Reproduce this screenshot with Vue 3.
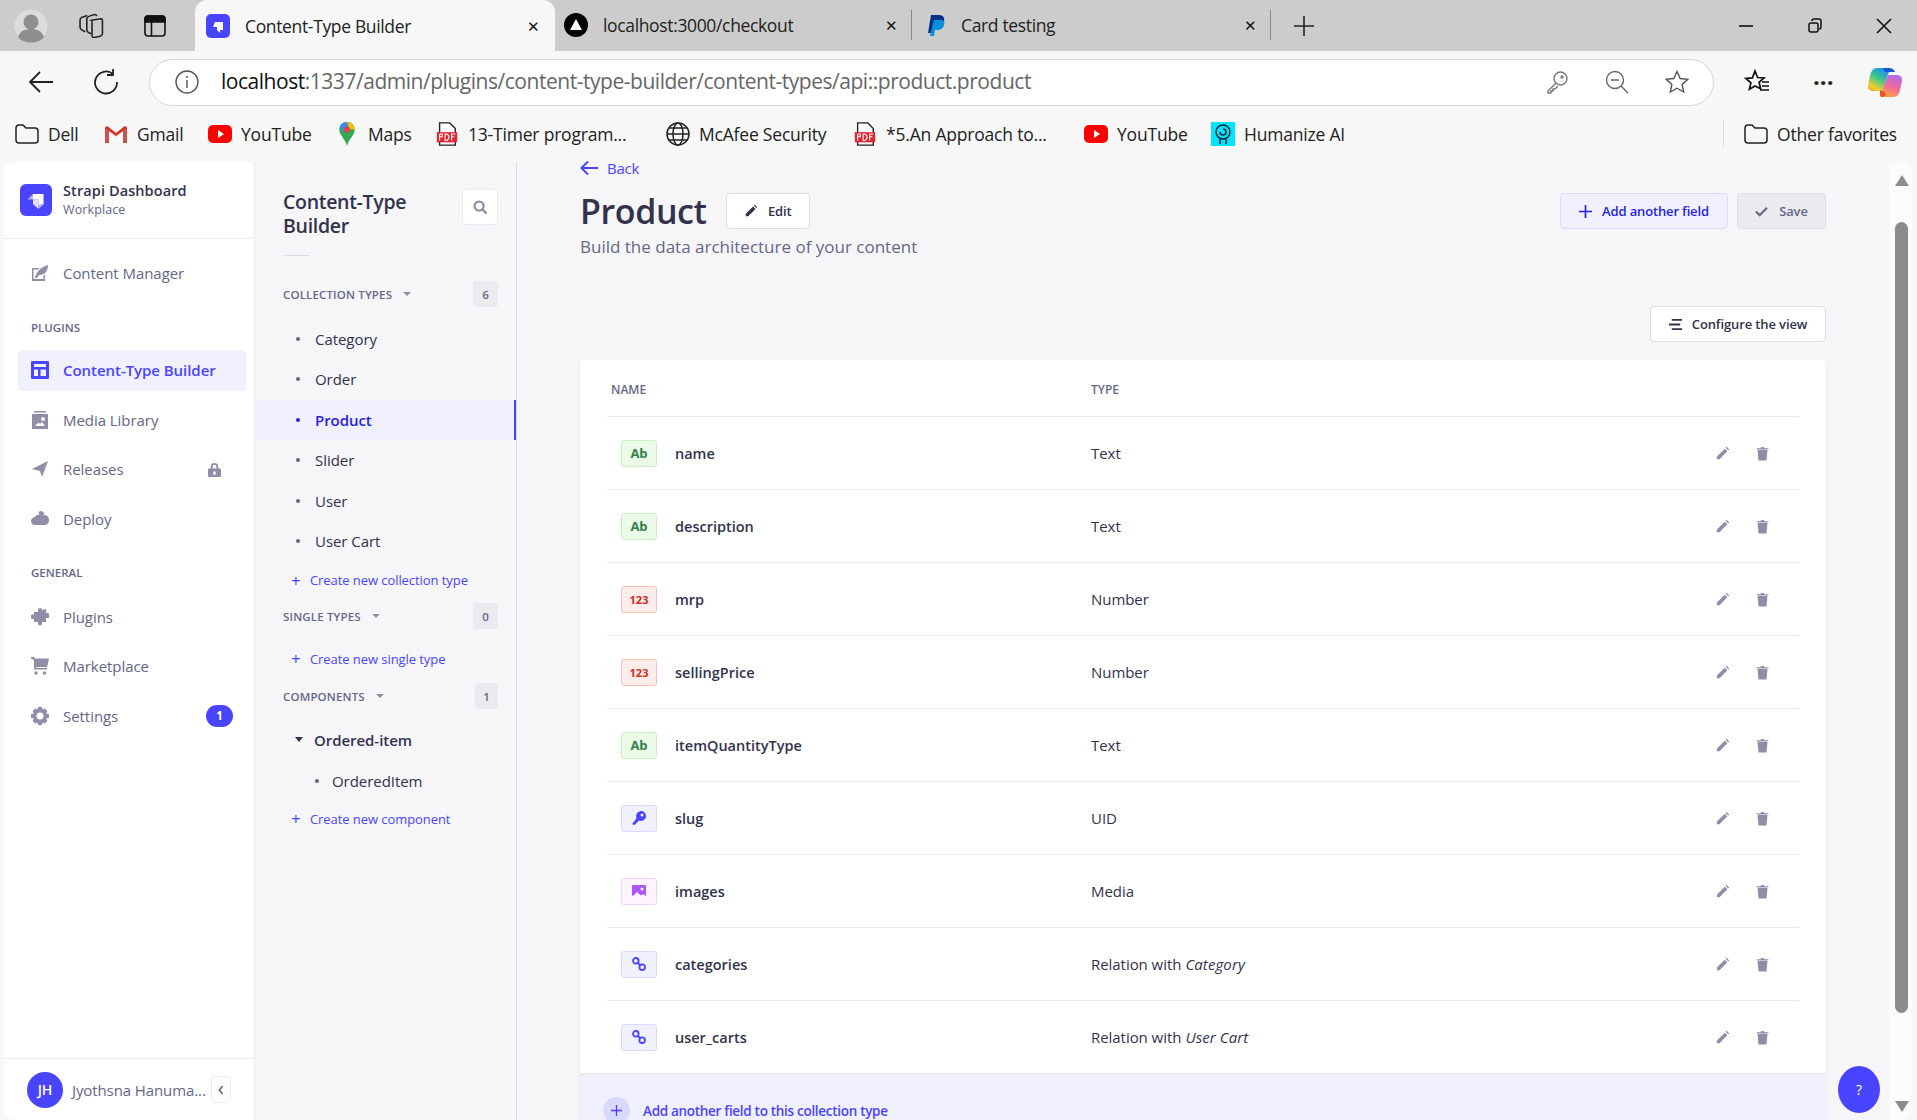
<script setup>
const bookmarks = [
  { label: 'Dell', icon: 'folder', width: 89 },
  { label: 'Gmail', icon: 'gmail', width: 104 },
  { label: 'YouTube', icon: 'yt', width: 127 },
  { label: 'Maps', icon: 'maps', width: 100 },
  { label: '13-Timer program...', icon: 'pdf', width: 231 },
  { label: 'McAfee Security', icon: 'globe', width: 187 },
  { label: '*5.An Approach to...', icon: 'pdf', width: 231 },
  { label: 'YouTube', icon: 'yt', width: 127 },
  { label: 'Humanize AI', icon: 'human', width: 150 }
]

const pencil = 'M3 21v-4.2L15.6 4.2l4.2 4.2L7.2 21H3zM17 2.8l1.5-1.5 4.2 4.2-1.5 1.5L17 2.8z'
const trash = 'M4 6h16l-1.6 17H5.6L4 6zM2.5 3.5h6L10 1.5h4l1.5 2h6V5h-19V3.5z'

const fields = [
  { name: 'name', type: 'Text', kind: 'text' },
  { name: 'description', type: 'Text', kind: 'text' },
  { name: 'mrp', type: 'Number', kind: 'num' },
  { name: 'sellingPrice', type: 'Number', kind: 'num' },
  { name: 'itemQuantityType', type: 'Text', kind: 'text' },
  { name: 'slug', type: 'UID', kind: 'uid' },
  { name: 'images', type: 'Media', kind: 'media' },
  { name: 'categories', type: 'Relation with', target: 'Category', kind: 'rel' },
  { name: 'user_carts', type: 'Relation with', target: 'User Cart', kind: 'rel' }
]

const collections = ['Category', 'Order', 'Product', 'Slider', 'User', 'User Cart']
</script>

<template>
  <div class="screen">
    <div class="tabbar">
      <div class="tab-tools">
        <svg class="avatar-ph" viewBox="0 0 34 34">
          <circle cx="17" cy="17" r="16.500" fill="#dcdcdc" />
          <circle cx="17" cy="13" r="7.500" fill="#8f8f8f" />
          <path d="M4 28c2-6 7-8 13-8s11 2 13 8c-3 4-8 5.500-13 5.500S7 32 4 28z" fill="#8f8f8f" />
        </svg>
        <svg class="tool" viewBox="0 0 24 24" fill="none" stroke="#222" stroke-width="1.500">
          <path d="M12 7l9-1.500c1 0 1.500.5 1.500 1.500v13c0 1-.5 1.500-1.500 2l-6 1.500c-1.500.3-2.500-.5-2.500-2V9c0-1 .2-1.700-.5-2z" />
          <path d="M12 20c-3-1-4.500-2-4.500-4V6c0-2 1-2.500 2.500-3l5-1.500c1-.3 1.500 0 2 1.500" />
          <path d="M6 18c-3-1-5-2.500-5-4.500V7c0-1.500 1-2.500 2-3l5-1.500" />
        </svg>
        <svg class="tool tool-side" viewBox="0 0 22 22" fill="none" stroke="#111" stroke-width="1.600">
          <rect x="1" y="1" width="20" height="20" rx="3" />
          <path d="M1 4c0-2 1-3 3-3h14c2 0 3 1 3 3v3H1z" fill="#111" />
          <path d="M7.500 7v14" />
        </svg>
      </div>
      <div class="tab tab-active">
        <svg class="fav" viewBox="0 0 24 24">
          <rect width="24" height="24" rx="5" fill="#4945ff" />
          <path d="M9 8h8v8h-3v3l-3-3v-3H7z" fill="#fff" />
        </svg>
        <span class="tab-label">Content-Type Builder</span>
        <span class="tab-x">✕</span>
      </div>
      <div class="tab tab-two">
        <svg class="fav" viewBox="0 0 24 24">
          <circle cx="12" cy="12" r="12" fill="#000" />
          <path d="M12 6l6 11H6z" fill="#fff" />
        </svg>
        <span class="tab-label">localhost:3000/checkout</span>
        <span class="tab-x">✕</span>
      </div>
      <div class="tab tab-three">
        <svg class="fav" viewBox="0 0 24 24">
          <path d="M7 2h8c4 0 6 3 5 6-1 4-4 5-8 5H9l-1 7H4z" fill="#003087" />
          <path d="M10 7h7c3 0 4 2 3 5-1 4-4 5-7 5h-2l-1 6H6z" fill="#0a8fdc" />
        </svg>
        <span class="tab-label">Card testing</span>
        <span class="tab-x">✕</span>
      </div>
      <svg class="new-tab" viewBox="0 0 22 22" stroke="#222" stroke-width="1.6"><path d="M11 1v20M1 11h20" /></svg>
      <div class="win-controls">
        <svg viewBox="0 0 16 16" stroke="#111" stroke-width="1.6"><path d="M1 8h14" /></svg>
        <svg viewBox="0 0 16 16" fill="none" stroke="#111" stroke-width="1.5">
          <rect x="2" y="5" width="9" height="9" rx="2" />
          <path d="M5 3c0-1 1-2 2-2h5c1 0 2 1 2 2v6c0 1-1 2-2 2" />
        </svg>
        <svg viewBox="0 0 16 16" stroke="#111" stroke-width="1.6"><path d="M1 1l14 14M15 1 1 15" /></svg>
      </div>
    </div>

    <div class="toolbar">
      <svg class="nav-btn" viewBox="0 0 26 26" fill="none" stroke="#222" stroke-width="1.8">
        <path d="M25 13H2M12 3 2 13l10 10" />
      </svg>
      <svg class="nav-btn reload" viewBox="0 0 26 26" fill="none" stroke="#222" stroke-width="1.8">
        <path d="M20 5a11 11 0 1 0 4 8M20 0v6h-6" />
      </svg>
      <div class="omnibox">
        <svg class="info" viewBox="0 0 24 24" fill="none" stroke="#555" stroke-width="1.4">
          <circle cx="12" cy="12" r="11" />
          <path d="M12 10v8M12 6v2" />
        </svg>
        <span class="url"><b>localhost</b>:1337/admin/plugins/content-type-builder/content-types/api::product.product</span>
        <div class="omni-icons">
          <svg viewBox="0 0 24 24" fill="none" stroke="#777" stroke-width="1.4">
            <circle cx="15.5" cy="8.5" r="6.5" />
            <path d="M11 13 3 21v2h3v-2h2v-2h2l3-3" />
            <circle cx="17" cy="7" r="1" />
          </svg>
          <svg viewBox="0 0 24 24" fill="none" stroke="#666" stroke-width="1.4">
            <circle cx="10" cy="10" r="8.5" />
            <path d="M16 16l7 7M6 10h8" />
          </svg>
          <svg viewBox="0 0 24 24" fill="none" stroke="#555" stroke-width="1.4">
            <path d="M12 1.5l3.2 7 7.6.8-5.7 5.1 1.6 7.6L12 18.2 5.300 22l1.600-7.600L1.200 9.300l7.600-.8z" />
          </svg>
        </div>
      </div>
      <svg class="fav-list" viewBox="0 0 26 26" fill="none" stroke="#111" stroke-width="1.7">
        <path d="M11 2l2.600 6.500 6.400.5-4.900 4.300 1.500 6.500L11 17l-5.600 3.300 1.500-6.500L2 9.500l6.400-.6zM18 13h7M18 17h7M16 21h9" />
      </svg>
      <span class="dots">···</span>
      <svg class="copilot" viewBox="0 0 34 31">
        <defs>
          <linearGradient id="cpa" x1="0.7" y1="0" x2="0.2" y2="1">
            <stop offset="0" stop-color="#1a8ff0" />
            <stop offset="0.45" stop-color="#3cc98a" />
            <stop offset="0.85" stop-color="#f6d02b" />
            <stop offset="1" stop-color="#f4a62b" />
          </linearGradient>
          <linearGradient id="cpb" x1="0.7" y1="0" x2="0.3" y2="1">
            <stop offset="0" stop-color="#b06bf0" />
            <stop offset="0.5" stop-color="#f06aa0" />
            <stop offset="1" stop-color="#fba23c" />
          </linearGradient>
        </defs>
        <path d="M9 1h11c1.500 0 2 1 1.500 2.500L14 24H5c-3.500 0-5.500-2.500-5-6l2-9c1-5 3.500-8 7-8z" fill="url(#cpa)" />
        <path d="M15 1h6c3 0 5 1.500 6 4H17z" fill="#1454d8" />
        <path d="M20 8h9c3.500 0 5.500 2.500 5 6l-2 9c-1 5-3.500 7-7 7H14c-1.500 0-2-1-1.500-2.500z" fill="url(#cpb)" />
        <path d="M12 23l2 1c2 0 3 1 4 4l-3 2h-1c-2 0-2-2-2-4z" fill="#e8502c" />
      </svg>
    </div>

    <div class="bookmarks">
      <div v-for="(b, i) in bookmarks" :key="i" class="bm" :style="{ width: b.width + 'px' }">
        <svg v-if="b.icon === 'folder'" class="bm-ic" viewBox="0 0 24 24" fill="none" stroke="#222" stroke-width="1.500">
          <path d="M1 6c0-2 1-3 3-3h4l3 3h9c2 0 3 1 3 3v9c0 2-1 3-3 3H4c-2 0-3-1-3-3z" />
        </svg>
        <svg v-else-if="b.icon === 'gmail'" class="bm-ic" viewBox="0 0 24 24">
          <path d="M1 5v16h4V10l7 5 7-5v11h4V5l-3-1-8 6-8-6z" fill="#d9d9d9" />
          <path d="M1 5l4 2v14H1zM19 7l4-2v16h-4z" fill="#cf5048" />
          <path d="M3 4l9 7 9-7 2 2-11 8L1 6z" fill="#d93025" />
        </svg>
        <svg v-else-if="b.icon === 'yt'" class="bm-ic" viewBox="0 0 24 24">
          <rect y="3" width="24" height="18" rx="5" fill="#f00" />
          <path d="M10 8l6 4-6 4z" fill="#fff" />
        </svg>
        <svg v-else-if="b.icon === 'maps'" class="bm-ic" viewBox="0 0 20 28">
          <path d="M10 0c6 0 9 4 9 9 0 6-7 11-9 19C8 20 1 15 1 9c0-5 3-9 9-9z" fill="#34a853" />
          <path d="M2 5C3 2 6 0 10 0l3 5-7 8z" fill="#4285f4" />
          <path d="M10 0c5 0 9 4 9 9l-6-1-2-5z" fill="#fbbc04" />
          <circle cx="10" cy="9" r="3.500" fill="#ea4335" />
        </svg>
        <svg v-else-if="b.icon === 'pdf'" class="bm-ic" viewBox="0 0 24 26">
          <path d="M4 1h11l6 6v18H4z" fill="#fff" stroke="#222" stroke-width="1.500" />
          <rect x="1" y="11" width="22" height="11" fill="#e0252f" />
          <path d="M4 13v7M4 13h3v3H4M10 13v7h2l2-2v-3l-2-2zM17 20v-7h4M17 16h3" fill="none" stroke="#fff" stroke-width="1.200" />
        </svg>
        <svg v-else-if="b.icon === 'globe'" class="bm-ic" viewBox="0 0 24 24" fill="none" stroke="#222" stroke-width="1.500">
          <circle cx="12" cy="12" r="11" />
          <ellipse cx="12" cy="12" rx="5" ry="11" />
          <path d="M1 12h22M3 6h18M3 18h18" />
        </svg>
        <svg v-else class="bm-ic" viewBox="0 0 24 24">
          <rect width="24" height="24" fill="#00e5ff" />
          <circle cx="12" cy="10" r="7" fill="none" stroke="#123" stroke-width="1.500" />
          <path d="M9 16v6M15 16v6M12 7a3 3 0 1 1-3 3" fill="none" stroke="#123" stroke-width="1.500" />
        </svg>
        <span class="bm-label">{{ b.label }}</span>
      </div>
      <div class="bm-other">
        <svg class="bm-ic" viewBox="0 0 24 24" fill="none" stroke="#222" stroke-width="1.500">
          <path d="M1 6c0-2 1-3 3-3h4l3 3h9c2 0 3 1 3 3v9c0 2-1 3-3 3H4c-2 0-3-1-3-3z" />
        </svg>
        <span class="bm-label">Other favorites</span>
      </div>
    </div>

    <div class="page">
      <aside class="sidebar">
        <div class="brand">
          <svg class="brand-logo" viewBox="0 0 32 32">
            <rect width="32" height="32" rx="6" fill="#4945ff" />
            <path d="M13 10h10.500v10.500H18.500v-5H13z" fill="#fff" />
            <path d="M13 10v5.500H7.500zM18.500 20.500V25l5-4.500z" fill="#fff" opacity=".6" />
            <path d="M13 15.500h5.500V25L13 20z" fill="#fff" opacity=".85" />
          </svg>
          <div>
            <div class="brand-name">Strapi Dashboard</div>
            <div class="brand-sub">Workplace</div>
          </div>
        </div>
        <nav class="nav">
          <div class="group">
            <div class="nav-item">
              <svg class="nav-ic" viewBox="0 0 18 18" fill="#8e8ea9">
                <path d="M1 4h7v1.500H2.500v9.500h10v-4H14V17H1zM17 1c0 6-3 10-9 10l-2 3H4c1-5 5-11 13-13z" />
              </svg>
              Content Manager
            </div>
          </div>
          <div class="nav-label">PLUGINS</div>
          <div class="group">
            <div class="nav-item active">
              <svg class="nav-ic" viewBox="0 0 18 18" fill="#4945ff">
                <path fill-rule="evenodd" d="M1 0h16a1 1 0 0 1 1 1v16a1 1 0 0 1-1 1H1a1 1 0 0 1-1-1V1a1 1 0 0 1 1-1zm2 3v3h12V3zm0 5.500V15h4V8.500zm6.500 0V15H15V8.500z" />
              </svg>
              Content-Type Builder
            </div>
            <div class="nav-item">
              <svg class="nav-ic" viewBox="0 0 18 18" fill="#8e8ea9">
                <path fill-rule="evenodd" d="M3 0h12v1.500H3zM1 3h16v15H1zm3 12h10l-3-4-2 2-1.500-1.500zm8-9a2 2 0 1 0 0 4 2 2 0 0 0 0-4z" />
              </svg>
              Media Library
            </div>
            <div class="nav-item">
              <svg class="nav-ic" viewBox="0 0 18 18" fill="#8e8ea9"><path d="M17 1 11 17l-2-6-8-2zM15 3 9 9" /></svg>
              Releases
              <svg class="lock" viewBox="0 0 14 16" fill="#8e8ea9">
                <path fill-rule="evenodd" d="M3 7V5a4 4 0 0 1 8 0v2h2a1 1 0 0 1 1 1v7a1 1 0 0 1-1 1H1a1 1 0 0 1-1-1V8a1 1 0 0 1 1-1zm2 0h4V5a2 2 0 0 0-4 0zm2 3a1.500 1.500 0 0 0-1 2.500V14h2v-1.500A1.500 1.500 0 0 0 7 10z" />
              </svg>
            </div>
            <div class="nav-item">
              <svg class="nav-ic" viewBox="0 0 18 18" fill="#8e8ea9">
                <path d="M9 1c2 0 4 1 4.500 3L8 7.500c1-2 .5-3-.5-4C8 2 8.500 1 9 1zM4 7c1-2 3-2.500 5-1.500L14 5c3 .5 4 3 4 5 0 3-2 5-5 5H4c-3 0-4-2-4-4 0-2 2-4 4-4z" />
              </svg>
              Deploy
            </div>
          </div>
          <div class="nav-label general">GENERAL</div>
          <div class="group">
            <div class="nav-item">
              <svg class="nav-ic" viewBox="0 0 18 18" fill="#8e8ea9">
                <path d="M7 4V2a2 2 0 0 1 4 0l4-1v4h1.500a2 2 0 0 1 0 5H15v4h-4v1.500a2 2 0 0 1-4 0V14H3v-3H1.500a2 2 0 0 1 0-4.500H3V4z" />
              </svg>
              Plugins
            </div>
            <div class="nav-item">
              <svg class="nav-ic" viewBox="0 0 18 18" fill="#8e8ea9">
                <path d="M0 0h3l1 1.500h14L16 10H5v1h11v1.500H3V3L0 1.500z" />
                <circle cx="5" cy="16" r="1.700" />
                <circle cx="13.500" cy="16" r="1.700" />
              </svg>
              Marketplace
            </div>
            <div class="nav-item">
              <svg class="nav-ic" viewBox="0 0 18 18" fill="#8e8ea9">
                <path fill-rule="evenodd" d="M7 0h4l.5 2.500 2.300-1 2.600 2.700-1.200 2.300L18 7v4l-2.800.5 1.200 2.300-2.600 2.700-2.300-1L11 18H7l-.5-2.500-2.300 1-2.600-2.700 1.200-2.300L0 11V7l2.800-.5-1.200-2.300 2.600-2.700 2.300 1zm2 5.500a3.500 3.500 0 1 0 0 7 3.500 3.500 0 0 0 0-7z" />
              </svg>
              Settings
              <span class="badge">1</span>
            </div>
          </div>
        </nav>
        <div class="user">
          <span class="avatar">JH</span>
          <span class="user-name">Jyothsna Hanuma...</span>
          <span class="collapse">
            <svg viewBox="0 0 10 14" fill="none" stroke="#666687" stroke-width="2"><path d="M7 2 3 7l4 5" /></svg>
          </span>
        </div>
      </aside>

      <section class="subnav">
        <div class="sub-head">
          <h2>Content-Type Builder</h2>
          <span class="search-btn">
            <svg viewBox="0 0 16 16" fill="none" stroke="#8e8ea9" stroke-width="2.400">
              <circle cx="6.500" cy="6.500" r="4.800" />
              <path d="M10 10l4.500 4.500" />
            </svg>
          </span>
        </div>
        <div class="sub-rule"></div>

        <div class="sec-head">
          <span>COLLECTION TYPES</span><i class="caret"></i>
          <span class="count">6</span>
        </div>
        <ul class="sub-list">
          <li v-for="c in collections" :key="c" :class="{ on: c === 'Product' }"><i class="dot"></i>{{ c }}</li>
        </ul>
        <div class="create create-first"><span class="plus">+</span>Create new collection type</div>

        <div class="sec-head sec-single">
          <span>SINGLE TYPES</span><i class="caret"></i>
          <span class="count">0</span>
        </div>
        <div class="create create-single"><span class="plus">+</span>Create new single type</div>

        <div class="sec-head sec-comp">
          <span>COMPONENTS</span><i class="caret"></i>
          <span class="count small">1</span>
        </div>
        <div class="comp-group"><i class="caret dark"></i>Ordered-item</div>
        <div class="comp-item"><i class="dot"></i>OrderedItem</div>
        <div class="create create-comp"><span class="plus">+</span>Create new component</div>
      </section>

      <main class="main">
        <div class="back">
          <svg viewBox="0 0 18 16" fill="none" stroke="#4945ff" stroke-width="2"><path d="M18 8H2M8 1.500 1.500 8 8 14.500" /></svg>
          Back
        </div>
        <div class="title-row">
          <h1>Product</h1>
          <button class="btn edit-btn">
            <svg viewBox="0 0 24 24" fill="#32324d"><path :d="pencil" /></svg>
            Edit
          </button>
          <div class="spacer"></div>
          <button class="btn add-btn">
            <svg viewBox="0 0 14 14" stroke="#271fe0" stroke-width="1.800"><path d="M7 0v14M0 7h14" /></svg>
            Add another field
          </button>
          <button class="btn save-btn">
            <svg viewBox="0 0 14 12" fill="none" stroke="#666687" stroke-width="2.400"><path d="M1 6l4 4 8-8" /></svg>
            Save
          </button>
        </div>
        <p class="subtitle">Build the data architecture of your content</p>
        <div class="config-row">
          <button class="btn config-btn">
            <svg viewBox="0 0 14 14" stroke="#32324d" stroke-width="2"><path d="M3 2h11M0 7h12M3 12h11" /></svg>
            Configure the view
          </button>
        </div>

        <div class="card">
          <div class="thead">
            <span class="col-name">NAME</span>
            <span class="col-type">TYPE</span>
          </div>
          <div v-for="f in fields" :key="f.name" class="row">
            <span class="col-name cell-name">
              <span class="chip" :class="'chip-' + f.kind">
                <template v-if="f.kind === 'text'">Ab</template>
                <template v-else-if="f.kind === 'num'">123</template>
                <svg v-else-if="f.kind === 'uid'" viewBox="0 0 14 14" fill="#4945ff">
                  <path fill-rule="evenodd" d="M9 0a5 5 0 0 1 0 10c-.7 0-1.300-.1-1.900-.4L3 13.500l-1.800.5-1-1L4.600 7A5 5 0 0 1 9 0zm1 2.500a1.500 1.500 0 1 0 0 3 1.500 1.500 0 0 0 0-3z" />
                </svg>
                <svg v-else-if="f.kind === 'media'" viewBox="0 0 14 12" fill="#ac56f5">
                  <path fill-rule="evenodd" d="M1 0h12a1 1 0 0 1 1 1v10l-3-2-2 1.500L5 7 2 10l-2 1V1a1 1 0 0 1 1-1zm9 2.500a1.500 1.500 0 1 0 0 3 1.500 1.500 0 0 0 0-3z" />
                </svg>
                <svg v-else viewBox="0 0 14 14" fill="none" stroke="#4945ff" stroke-width="1.800">
                  <circle cx="3.800" cy="3.800" r="2.800" />
                  <circle cx="10.200" cy="10.200" r="2.800" />
                  <path d="M5.500 5.500l3 3" />
                </svg>
              </span>
              <span class="field-name">{{ f.name }}</span>
            </span>
            <span class="col-type">{{ f.type }}<em v-if="f.target">{{ f.target }}</em></span>
            <span class="actions">
              <svg viewBox="0 0 24 24" fill="#8e8ea9"><path :d="pencil" /></svg>
              <svg viewBox="0 0 24 24" fill="#8e8ea9"><path :d="trash" /></svg>
            </span>
          </div>
          <div class="card-foot">
            <span class="foot-plus">
              <svg viewBox="0 0 12 12" stroke="#4945ff" stroke-width="1.400"><path d="M6 0v12M0 6h12" /></svg>
            </span>
            <span class="foot-text">Add another field to this collection type</span>
          </div>
        </div>
      </main>

      <div class="scrollbar">
        <i class="arrow up"></i>
        <div class="thumb"></div>
        <i class="arrow down"></i>
      </div>

      <button class="help">?</button>
    </div>
  </div>
</template>

<style>
html, body { margin: 0; background: #f7f7f7; overflow: hidden; }
</style>

<style scoped>
* { box-sizing: border-box; }
.screen { width: 1917px; height: 1120px; display: flex; flex-direction: column; overflow: hidden; font-family: "Open Sans", "Noto Sans", sans-serif; color: #32324d; background: #f7f7f7; }

/* browser chrome */
.tabbar { height: 51px; background: #ccc; display: flex; align-items: flex-end; flex: none; }
.tab-tools { width: 195px; height: 51px; display: flex; align-items: center; padding-left: 14px; }
.avatar-ph { width: 34px; height: 34px; }
.tool { width: 25px; height: 25px; margin-left: 31px; }
.tool.tool-side { width: 22px; height: 22px; margin-left: 40px; }
.tab { height: 51px; display: flex; align-items: center; font-size: 17.5px; letter-spacing: -0.35px; color: #222; }
.tab-active { width: 360px; background: #f7f7f7; border-radius: 12px 12px 0 0; padding: 0 15px 0 11px; }
.tab-two { width: 357px; padding: 0 13px 0 9px; border-right: 1px solid #888; height: 30px; margin-bottom: 11px; }
.tab-three { width: 359px; padding: 0 13px 0 12px; border-right: 1px solid #888; height: 30px; margin-bottom: 11px; }
.tab-three .fav { margin-right: 13px; }
.fav { width: 24px; height: 24px; flex: none; margin-right: 15px; }
.tab-label { flex: 1; white-space: nowrap; }
.tab-x { font-size: 15px; color: #111; }
.new-tab { width: 22px; height: 22px; margin: 0 0 14px 22px; }
.win-controls { margin-left: auto; display: flex; gap: 53px; padding-right: 25px; align-self: center; }
.win-controls svg { width: 16px; height: 16px; fill: none; }

.toolbar { height: 60px; display: flex; align-items: center; padding: 2px 0 0 28px; flex: none; }
.nav-btn { width: 26px; height: 26px; }
.reload { margin-left: 39px; }
.omnibox { margin-left: 30px; width: 1565px; height: 47px; background: #fff; border: 1.5px solid #d4d4d4; border-radius: 24px; display: flex; align-items: center; padding-left: 25px; }
.info { width: 24px; height: 24px; flex: none; }
.url { margin-left: 22px; margin-top: -2px; font-size: 21px; letter-spacing: -0.47px; color: #666; white-space: nowrap; }
.url b { font-weight: 400; color: #111; }
.omni-icons { margin-left: auto; display: flex; gap: 36px; padding-right: 24px; }
.omni-icons svg { width: 24px; height: 24px; }
.fav-list { width: 26px; height: 26px; margin-left: 30px; }
.dots { margin-left: 43px; font-size: 24px; font-weight: 700; color: #222; line-height: 1; }
.copilot { width: 34px; height: 31px; margin-left: 34px; }

.bookmarks { height: 49px; display: flex; align-items: center; padding: 0 0 3px 15px; flex: none; }
.bm { display: flex; align-items: center; flex: none; }
.bm-ic { width: 24px; height: 24px; flex: none; margin-right: 9px; }
.bm-label { font-size: 17.5px; letter-spacing: -0.2px; color: #222; white-space: nowrap; }
.bm-other { margin-left: auto; padding: 0 20px 0 20px; height: 28px; display: flex; align-items: center; border-left: 1px solid #ddd; }

/* strapi page */
.page { position: relative; flex: 1; margin: 2px 5px 0 4px; min-height: 0; display: flex; background: #f6f6f9; border-radius: 10px; }
.sidebar { width: 251px; flex: none; background: #fff; border-right: 1px solid #eaeaef; border-radius: 10px 0 0 10px; display: flex; flex-direction: column; }
.brand { height: 77px; flex: none; display: flex; align-items: center; gap: 11px; padding: 0 16px; border-bottom: 1px solid #eaeaef; }
.brand-logo { width: 32px; height: 32px; flex: none; }
.brand-name { font-size: 14.500px; font-weight: 600; line-height: 20px; letter-spacing: 0.1px; }
.brand-sub { font-size: 12.500px; color: #666687; line-height: 18px; letter-spacing: 0.1px; }
.nav { padding: 13.500px 8px 0 14px; flex: 1; }
.group { display: flex; flex-direction: column; gap: 8px; }
.nav-item { height: 41.500px; display: flex; align-items: center; padding: 0 13px; border-radius: 4px; font-size: 15px; letter-spacing: -0.05px; color: #666687; }
.nav-item.active { background: #f0f0ff; color: #4945ff; font-weight: 600; }
.nav-ic { width: 18px; height: 18px; margin-right: 14px; flex: none; }
.lock { width: 13px; height: 15px; margin-left: auto; margin-right: 12px; }
.nav-label { font-size: 11.500px; font-weight: 600; color: #666687; height: 20px; line-height: 20px; margin: 23.500px 0 12px 13px; }
.nav-label.general { margin-bottom: 13px; }
.badge { margin-left: auto; width: 27px; height: 22px; border-radius: 11px; background: #4945ff; color: #fff; font-size: 11.500px; font-weight: 700; display: flex; align-items: center; justify-content: center; }
.user { height: 62px; border-top: 1px solid #eaeaef; display: flex; align-items: center; padding: 0 23px 0 23px; flex: none; }
.avatar { width: 36px; height: 36px; border-radius: 50%; background: #4945ff; color: #fff; font-size: 14px; font-weight: 600; display: flex; align-items: center; justify-content: center; flex: none; }
.user-name { margin-left: 9px; font-size: 15px; letter-spacing: -0.1px; color: #666687; white-space: nowrap; flex: 1; }
.collapse { width: 20px; height: 27px; background: #fff; border: 1px solid #eaeaef; border-radius: 4px; display: flex; align-items: center; justify-content: center; flex: none; }
.collapse svg { width: 8px; height: 12px; }

.subnav { width: 262px; flex: none; background: #f6f6f9; border-right: 1px solid #dcdce4; padding-top: 28px; }
.sub-head { display: flex; justify-content: space-between; padding: 0 18px 0 28px; }
.sub-head h2 { margin: 0; width: 150px; font-size: 19.500px; font-weight: 600; line-height: 24px; letter-spacing: -0.3px; }
.search-btn { width: 36px; height: 36px; margin-top: -1px; background: #fff; border: 1px solid #eaeaef; border-radius: 4px; display: flex; align-items: center; justify-content: center; }
.search-btn svg { width: 15px; height: 15px; }
.sub-rule { width: 27px; height: 1px; background: #dcdce4; margin: 17px 0 0 28px; }
.sec-head { display: flex; align-items: center; height: 26px; padding: 0 18px 0 28px; margin-top: 25px; font-size: 11.500px; font-weight: 600; color: #666687; letter-spacing: 0.15px; }
.caret { width: 0; height: 0; border-left: 4.500px solid transparent; border-right: 4.500px solid transparent; border-top: 4.500px solid #8e8ea9; margin-left: 11px; }
.count { margin-left: auto; width: 25px; height: 26px; background: #eaeaef; border-radius: 4px; display: flex; align-items: center; justify-content: center; color: #666687; }
.count.small { width: 23px; }
.sub-list { list-style: none; margin: 11.500px 0 0; padding: 0; }
.sub-list li { height: 40.500px; display: flex; align-items: center; padding-left: 52px; font-size: 15px; letter-spacing: -0.05px; color: #32324d; }
.sub-list li.on { background: #f0f0ff; color: #271fe0; font-weight: 600; border-right: 2px solid #4945ff; }
.dot { width: 4px; height: 4px; border-radius: 50%; background: #666687; margin-right: 15px; margin-left: -11px; }
.on .dot { background: #271fe0; }
.create { display: flex; align-items: center; height: 20px; padding-left: 36px; font-size: 13px; letter-spacing: -0.07px; color: #4945ff; }
.plus { width: 14px; font-size: 17px; margin-right: 5px; }
.create-first { margin-top: 8.500px; }
.sec-single { margin-top: 13px; }
.create-single { margin-top: 19.500px; }
.sec-comp { margin-top: 14.500px; }
.comp-group { height: 20px; margin-top: 20.500px; display: flex; align-items: center; padding-left: 28px; font-size: 15px; font-weight: 600; letter-spacing: -0.05px; }
.comp-group .caret { margin: 0 11px 0 12px; border-top-color: #32324d; border-top-width: 5px; }
.comp-item { height: 20px; margin-top: 21px; display: flex; align-items: center; padding-left: 71px; font-size: 15px; letter-spacing: -0.05px; }
.comp-item .dot { margin-right: 13px; }
.create-comp { margin-top: 18px; }

.main { flex: 1; min-width: 0; padding: 0 63px; }
.back { height: 12px; line-height: 12px; display: flex; align-items: center; gap: 9px; font-size: 15px; color: #4945ff; letter-spacing: -0.2px; }
.back svg { width: 18px; height: 16px; }
.title-row { display: flex; align-items: center; height: 36px; margin-top: 19px; }
.title-row h1 { margin: 0; font-size: 34px; font-weight: 600; letter-spacing: -0.4px; line-height: 36px; }
.spacer { flex: 1; }
.btn { height: 36px; display: inline-flex; align-items: center; border-radius: 4px; border: 1px solid #dcdce4; background: #fff; font: 600 13px "Open Sans", sans-serif; letter-spacing: -0.15px; color: #32324d; padding: 0; }
.edit-btn { margin-left: 19px; width: 84px; justify-content: center; gap: 10px; }
.edit-btn svg { width: 14px; height: 14px; }
.add-btn { width: 168px; justify-content: center; gap: 10px; background: #f0f0ff; border-color: #d9d8ff; color: #271fe0; }
.add-btn svg { width: 13px; height: 13px; }
.save-btn { width: 89px; margin-left: 9px; justify-content: center; gap: 11px; background: #eaeaef; color: #666687; }
.save-btn svg { width: 13px; height: 11px; }
.subtitle { margin: 6px 0 0; font-size: 17px; line-height: 24px; color: #666687; }
.config-row { display: flex; justify-content: flex-end; margin-top: 47px; }
.config-btn { width: 176px; justify-content: center; gap: 10px; letter-spacing: -0.12px; }
.config-btn svg { width: 13px; height: 13px; }

.card { margin-top: 18px; background: #fff; border-radius: 4px 4px 0 0; padding: 0 27px; box-shadow: 0 1px 4px rgba(33, 33, 52, 0.06); }
.thead { height: 56px; display: flex; align-items: center; font-size: 12px; font-weight: 600; color: #666687; padding-top: 2px; }
.thead .col-name { padding-left: 4px; }
.col-name { width: 484px; flex: none; }
.row { height: 73px; display: flex; align-items: center; border-top: 1px solid #eaeaef; font-size: 15px; letter-spacing: -0.05px; color: #32324d; }
.cell-name { display: flex; align-items: center; padding-left: 14px; }
.chip { width: 36px; height: 27px; flex: none; border-radius: 3px; border: 1px solid; display: flex; align-items: center; justify-content: center; font-size: 13px; font-weight: 700; letter-spacing: 0; }
.chip svg { width: 14px; height: 14px; }
.chip-text { background: #eafbe7; border-color: #c6f0c2; color: #328048; }
.chip-num { background: #fcecea; border-color: #f5c0b8; color: #d02b20; font-size: 11px; }
.chip-uid, .chip-rel { background: #f0f0ff; border-color: #d9d8ff; }
.chip-media { background: #fdf4ff; border-color: #f4d0ff; }
.field-name { margin-left: 18px; font-size: 14.500px; font-weight: 600; letter-spacing: 0; }
.col-type em { margin-left: 4px; letter-spacing: 0.1px; }
.actions { margin-left: auto; display: flex; gap: 25px; padding-right: 29px; }
.actions svg { width: 15px; height: 15px; }
.card-foot { margin: 0 -27px; height: 47px; overflow: hidden; background: #f0f0ff; border-top: 2px solid #eaeaef; display: flex; align-items: flex-start; padding: 22px 0 0 23px; }
.foot-plus { width: 27px; height: 27px; border-radius: 50%; background: #d9d8ff; display: flex; align-items: center; justify-content: center; margin-right: 13px; flex: none; }
.foot-plus svg { width: 11px; height: 11px; }
.foot-text { font-size: 13.500px; font-weight: 600; color: #4945ff; letter-spacing: -0.3px; line-height: 23px; margin-top: 3px; }

.scrollbar { width: 23px; flex: none; background: #fbfbfb; border-radius: 0 10px 10px 0; display: flex; flex-direction: column; align-items: center; padding-left: 2px; }
.arrow { width: 0; height: 0; border-left: 7.500px solid transparent; border-right: 7.500px solid transparent; flex: none; }
.arrow.up { border-bottom: 11px solid #8c8c8c; margin-top: 13px; }
.arrow.down { border-top: 11px solid #8c8c8c; margin-top: 88px; }
.thumb { width: 13px; height: 791px; background: #8c8c8c; border-radius: 7px; margin-top: 36px; flex: none; }
.help { position: absolute; right: 32px; bottom: 7px; width: 42px; height: 47px; border-radius: 50%; border: none; background: #4945ff; color: #fff; font: 400 14px "Open Sans", sans-serif; }
</style>
